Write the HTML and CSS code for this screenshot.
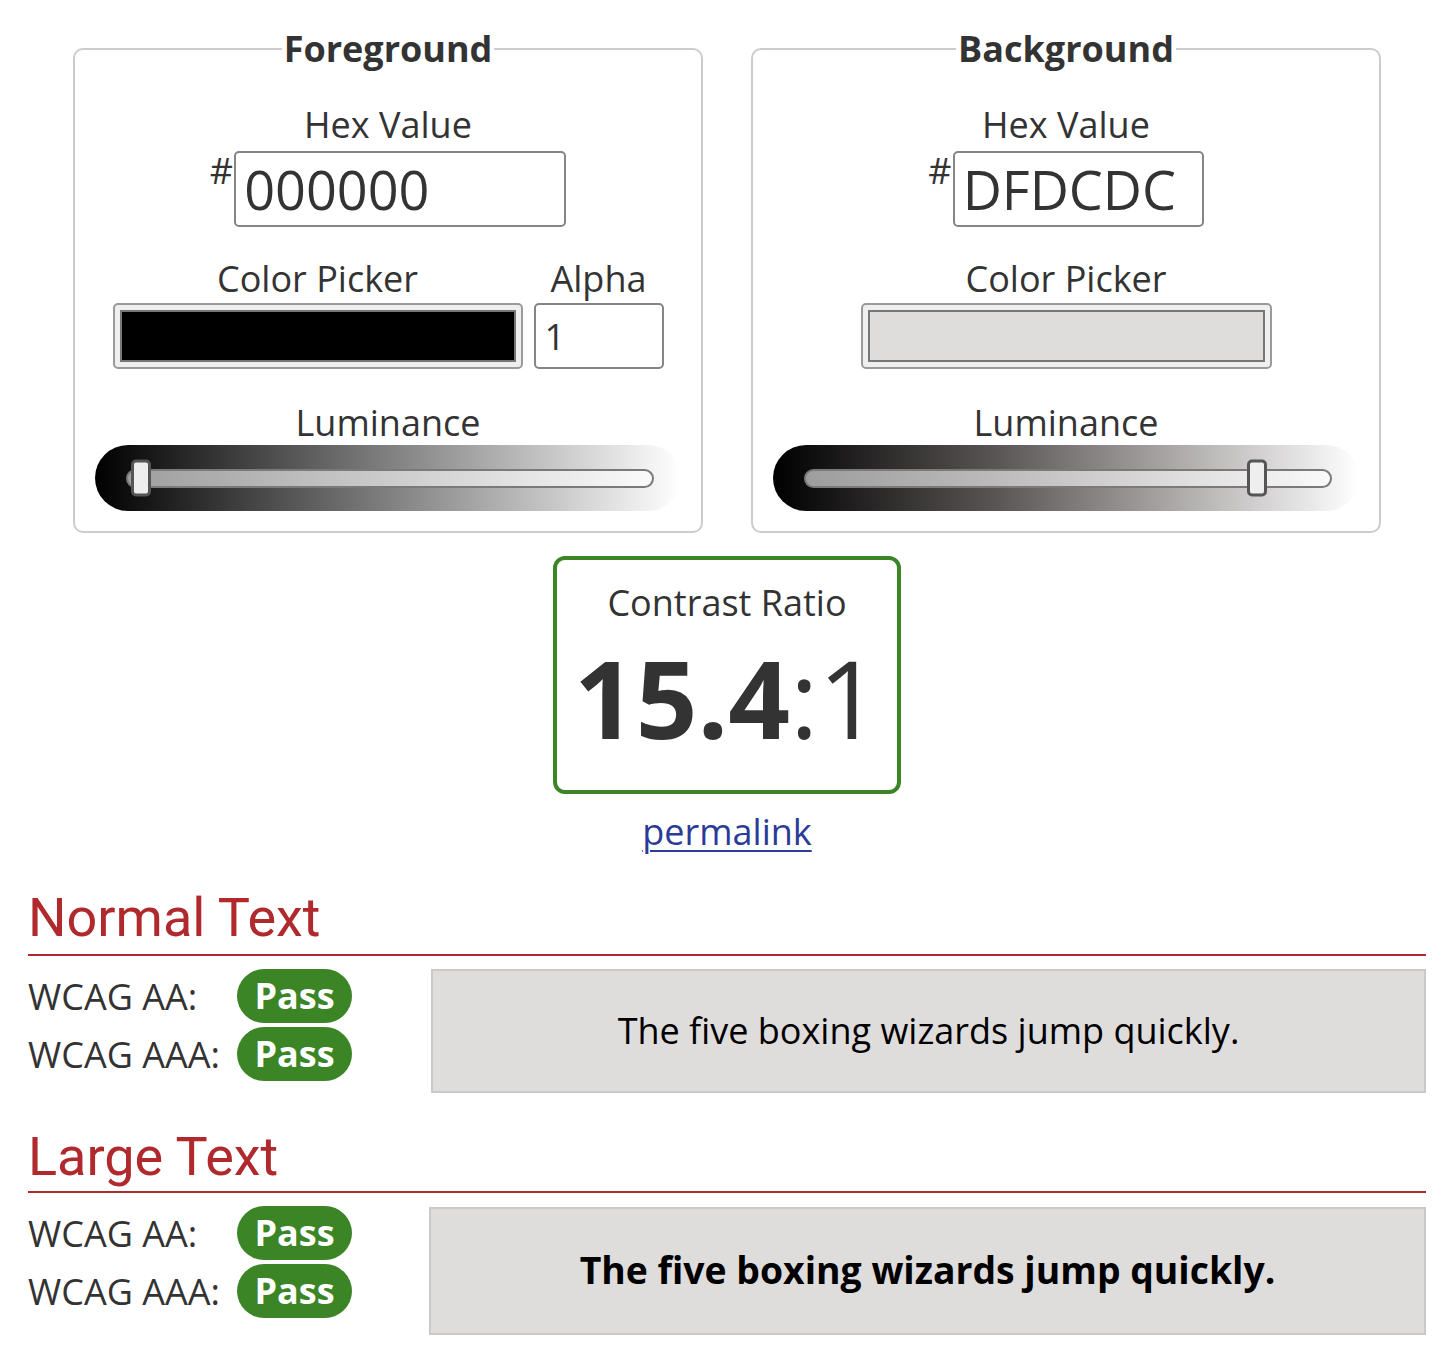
FILE: index.html
```html
<!DOCTYPE html>
<html lang="en">
<head>
<meta charset="utf-8">
<title>Contrast Checker</title>
<link rel="stylesheet" href="styles.css">
</head>
<body>
<main class="page">
  <div class="pickers">
    <fieldset class="panel">
      <legend class="panel-title">Foreground</legend>
      <div class="field field--hex">
        <label class="label" for="fg-hex">Hex Value</label>
        <div class="hex-row">
          <span class="hash">#</span>
          <input class="hex-input hex-input--fg" id="fg-hex" type="text" value="000000">
        </div>
      </div>
      <div class="picker-row">
        <div class="field field--picker">
          <div class="label">Color Picker</div>
          <div class="swatch-box swatch-box--fg"><div class="swatch swatch--fg"></div></div>
        </div>
        <div class="field field--picker">
          <div class="label">Alpha</div>
          <input class="alpha-input" type="text" value="1">
        </div>
      </div>
      <div class="field field--lum">
        <div class="label">Luminance</div>
        <div class="lum lum--fg">
          <div class="lum-track"><span class="lum-thumb" style="left:3px"></span></div>
        </div>
      </div>
    </fieldset>

    <fieldset class="panel">
      <legend class="panel-title">Background</legend>
      <div class="field field--hex">
        <label class="label" for="bg-hex">Hex Value</label>
        <div class="hex-row">
          <span class="hash">#</span>
          <input class="hex-input hex-input--bg" id="bg-hex" type="text" value="DFDCDC">
        </div>
      </div>
      <div class="picker-row">
        <div class="field field--picker">
          <div class="label">Color Picker</div>
          <div class="swatch-box swatch-box--bg"><div class="swatch swatch--bg"></div></div>
        </div>
      </div>
      <div class="field field--lum">
        <div class="label">Luminance</div>
        <div class="lum lum--bg">
          <div class="lum-track"><span class="lum-thumb" style="left:441px"></span></div>
        </div>
      </div>
    </fieldset>
  </div>

  <div class="ratio-box">
    <div class="ratio-label">Contrast Ratio</div>
    <div class="ratio-value"><span class="ratio-main">15.4</span><span class="ratio-tail">:1</span></div>
  </div>
  <a class="permalink" href="#">permalink</a>

  <section class="result">
    <h2 class="result-title">Normal Text</h2>
    <div class="result-body">
      <div class="checks">
        <div class="check"><span class="check-label">WCAG AA:</span><span class="badge">Pass</span></div>
        <div class="check"><span class="check-label">WCAG AAA:</span><span class="badge">Pass</span></div>
      </div>
      <div class="sample">The five boxing wizards jump quickly.</div>
    </div>
  </section>

  <section class="result result--large">
    <h2 class="result-title">Large Text</h2>
    <div class="result-body">
      <div class="checks">
        <div class="check"><span class="check-label">WCAG AA:</span><span class="badge">Pass</span></div>
        <div class="check"><span class="check-label">WCAG AAA:</span><span class="badge">Pass</span></div>
      </div>
      <div class="sample sample--large">The five boxing wizards jump quickly.</div>
    </div>
  </section>
</main>
</body>
</html>
```

FILE: styles.css
```css
* { box-sizing: border-box; }

html, body {
  margin: 0;
  padding: 0;
  background: #fff;
}

body {
  font-family: "Open Sans", "Liberation Sans", sans-serif;
  color: #333;
  font-size: 36px;
}

.page {
  padding: 24px 26px 0 28px;
}

/* ---------- picker panels ---------- */
.pickers {
  display: flex;
  justify-content: center;
  gap: 48px;
}

.panel {
  width: 630px;
  min-width: 0;
  margin: 0;
  padding: 29px 20px 20px;
  border: 2px solid #cccccc;
  border-radius: 10px;
  display: flex;
  flex-direction: column;
  align-items: center;
}

.panel-title {
  margin: 0 auto;
  padding: 0 2px;
  font-weight: 700;
  font-size: 36px;
  line-height: 49px;
  color: #333;
}

.field {
  display: flex;
  flex-direction: column;
  align-items: center;
}

.label {
  display: block;
  font-size: 36px;
  line-height: 46px;
  color: #333;
}

.field--hex .label { margin-bottom: 3px; }

.hex-row {
  display: flex;
  align-items: flex-start;
}

.hash {
  font-size: 36px;
  line-height: 36px;
  margin-top: 2px;
  margin-right: 1px;
  color: #333;
}

.hex-input,
.alpha-input {
  font-family: "Open Sans", "Liberation Sans", sans-serif;
  color: #333;
  background: #fff;
  border: 2px solid #858585;
  border-radius: 5px;
  outline: none;
  margin: 0;
}

.hex-input {
  height: 76px;
  font-size: 54px;
  padding: 0 8px;
}
.hex-input--fg { width: 332px; }
.hex-input--bg { width: 251px; }

.picker-row {
  display: flex;
  gap: 11px;
  margin-top: 29px;
}

.field--picker .label { margin-bottom: 1px; }

.swatch-box {
  height: 66px;
  padding: 5px 5px;
  background: #efefef;
  border: 2px solid #9a9a9a;
  border-radius: 5px;
}
.swatch-box--fg { width: 410px; }
.swatch-box--bg { width: 411px; }

.swatch {
  width: 100%;
  height: 100%;
  border: 2px solid #777;
}
.swatch--fg { background: #000; }
.swatch--bg { background: #dfdcdc; }

.alpha-input {
  width: 130px;
  height: 66px;
  font-size: 36px;
  padding: 0 9px;
}

.field--lum {
  align-self: stretch;
  margin-top: 31px;
}
.field--lum .label { margin-bottom: -1px; }

.lum {
  width: 100%;
  height: 66px;
  border-radius: 33px;
  display: flex;
  align-items: center;
}
.lum--fg { background: linear-gradient(to right, #000 0%, #fff 100%); }
.lum--bg { background: linear-gradient(to right, #000 0%, #5a5555 38%, #a8a4a4 67%, #fff 100%); }

.lum-track {
  position: relative;
  margin-left: 31px;
  width: 528px;
  height: 19px;
  border: 2px solid #7a7a7a;
  border-radius: 10px;
  background: rgba(255, 255, 255, 0.6);
}

.lum-thumb {
  position: absolute;
  top: 50%;
  width: 20px;
  height: 37px;
  transform: translateY(-50%);
  background: #eeeeee;
  border: 3px solid #555;
  border-radius: 5px;
}

/* ---------- contrast ratio ---------- */
.ratio-box {
  width: 348px;
  margin: 23px auto 0;
  padding: 18px 0 27px;
  border: 4px solid #3b8527;
  border-radius: 12px;
  text-align: center;
}

.ratio-label {
  font-size: 36px;
  line-height: 49px;
}

.ratio-value {
  margin-top: 6px;
  font-size: 108px;
  line-height: 130px;
  white-space: nowrap;
}
.ratio-main { font-weight: 700; }
.ratio-tail { font-weight: 400; }

.permalink {
  display: block;
  width: max-content;
  margin: 13px auto 0;
  font-size: 36px;
  line-height: 49px;
  color: #2a3b98;
  text-decoration: underline;
  text-decoration-thickness: 2px;
  text-underline-offset: 5px;
}

/* ---------- results ---------- */
.result-title {
  margin: 29px 0 0;
  padding-bottom: 3px;
  font-family: Roboto, "Liberation Sans", sans-serif;
  font-weight: 400;
  font-size: 54px;
  line-height: 66px;
  color: #b0292d;
  border-bottom: 2px solid #b0292d;
}
.result--large .result-title { margin-top: 31px; padding-bottom: 1px; }

.result-body {
  display: grid;
  grid-template-columns: 403px 1fr;
  align-items: start;
  margin-top: 13px;
}
.result--large .result-body { grid-template-columns: 401px 1fr; }

.checks {
  display: flex;
  flex-direction: column;
  gap: 4px;
}

.check {
  display: flex;
  align-items: center;
  height: 54px;
}

.check-label {
  width: 209px;
  font-size: 36px;
  line-height: 49px;
  color: #333;
}

.badge {
  width: 115px;
  height: 54px;
  border-radius: 27px;
  background: #3b8527;
  color: #fff;
  font-weight: 700;
  font-size: 36px;
  line-height: 54px;
  text-align: center;
}

.sample {
  background: #dfdcdc;
  border: 2px solid #cac8c8;
  padding: 35px 0 36px;
  text-align: center;
  color: #000;
  font-size: 36px;
  line-height: 49px;
}

.sample--large {
  font-weight: 700;
  font-size: 37.33px;
  line-height: 50px;
  padding: 36px 0 38px;
  margin-top: 1px;
}
```
